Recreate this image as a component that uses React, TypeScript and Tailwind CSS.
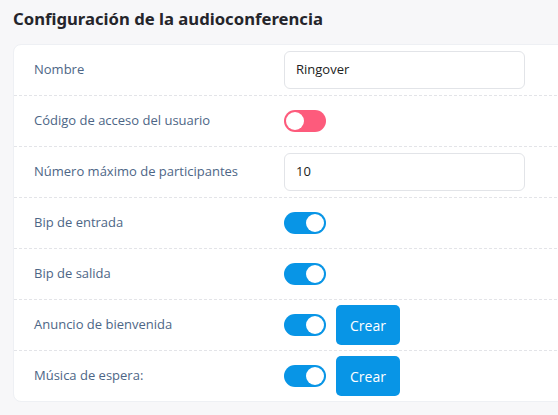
import React from "react";

function Toggle({ on, color }: { on: boolean; color: string }) {
  return (
    <div
      className={`relative w-[42px] h-[22px] rounded-full flex items-center ${on ? "justify-end" : "justify-start"} px-[2px]`}
      style={{ backgroundColor: color }}
    >
      <div className="w-[18px] h-[18px] rounded-full bg-white" />
    </div>
  );
}

function Row({ label, children, last }: { label: string; children: React.ReactNode; last?: boolean }) {
  return (
    <div className={`flex items-center ${last ? "h-[50px]" : "h-[51px] border-b border-dashed border-[#e3e4e8]"}`}>
      <div className="w-[270px] pl-[20px] text-[13px] text-[#4d6686]">{label}</div>
      <div className="flex items-center gap-[10px]">{children}</div>
    </div>
  );
}

function Input({ value }: { value: string }) {
  return (
    <div className="w-[241px] h-[38px] rounded-[6px] border border-[#e2e4e8] bg-white flex items-center pl-[11px] text-[13px] text-[#222]">
      {value}
    </div>
  );
}

function Btn() {
  return (
    <div className="w-[64px] h-[40px] rounded-[5px] bg-[#0895e6] text-white text-[14px] flex items-center justify-center">
      Crear
    </div>
  );
}

export default function App() {
  const blue = "#0895e6";
  return (
    <div
      className="w-[558px] h-[415px] overflow-hidden bg-[#f7f7f9] pl-[13px]"
      style={{ fontFamily: '"Open Sans", "Noto Sans", sans-serif' }}
    >
      <div
        className="h-[44px] pt-[7px] text-[16.7px] leading-[24px] font-bold text-[#25252b]"
        style={{ fontFamily: '"Noto Sans", "Open Sans", sans-serif' }}
      >
        Configuración de la audioconferencia
      </div>
      <div className="w-[620px] bg-white rounded-[8px] border border-[#eef0f4]">
        <Row label="Nombre">
          <Input value="Ringover" />
        </Row>
        <Row label="Código de acceso del usuario">
          <Toggle on={false} color="#fd5b7c" />
        </Row>
        <Row label="Número máximo de participantes">
          <Input value="10" />
        </Row>
        <Row label="Bip de entrada">
          <Toggle on color={blue} />
        </Row>
        <Row label="Bip de salida">
          <Toggle on color={blue} />
        </Row>
        <Row label="Anuncio de bienvenida">
          <Toggle on color={blue} />
          <Btn />
        </Row>
        <Row label="Música de espera:" last>
          <Toggle on color={blue} />
          <Btn />
        </Row>
      </div>
    </div>
  );
}
